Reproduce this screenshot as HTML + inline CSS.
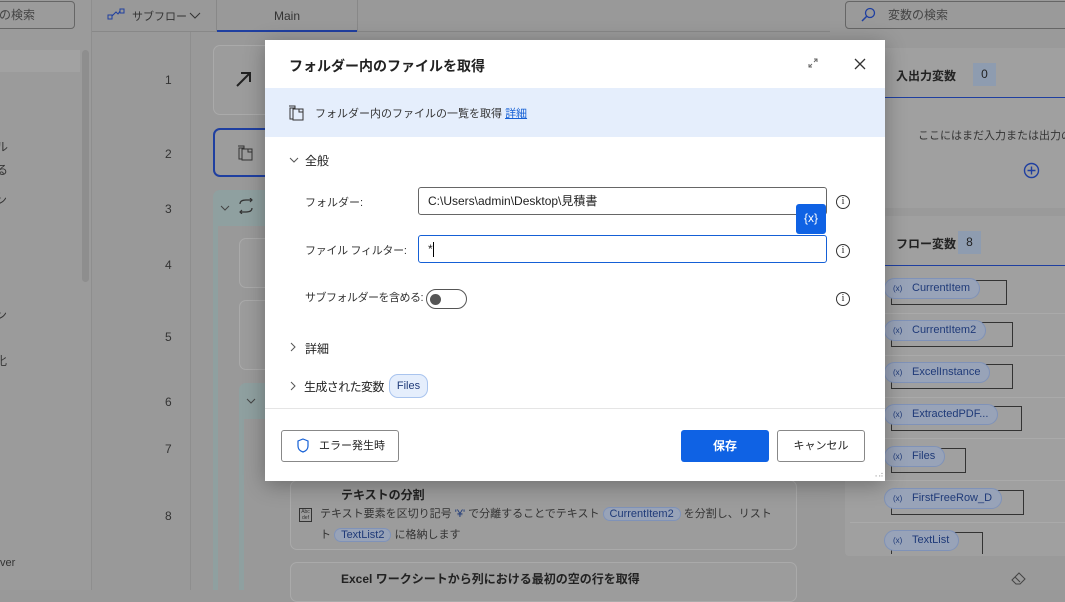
<!DOCTYPE html>
<html><head><meta charset="utf-8"><style>
*{box-sizing:border-box;margin:0;padding:0}
body{width:1065px;height:590px;overflow:hidden;position:relative;background:#999;font-family:"Liberation Sans","Noto Sans CJK JP",sans-serif;font-size:12px;color:#222}
.a{position:absolute;white-space:nowrap}
.card{position:absolute;background:#9c9c9c;border:1px solid #aaa;border-radius:7px}
.pill{position:absolute;height:21px;border:1px solid #7f92b8;border-radius:11px;background:#98a3b8;color:#1f3a78;font-size:11px;line-height:19px;padding:0 9px 0 27px;white-space:nowrap}
.pill i{position:absolute;left:8px;top:0;font-style:normal;font-size:8px}
.box{position:absolute;border:1px solid #333;height:25px}
.info{position:absolute;width:14px;height:14px;border:1px solid #333;border-radius:50%;font-size:10px;line-height:12px;text-align:center;font-family:"Liberation Serif",serif}
</style></head><body>
<div class="a" style="left:0;top:0;width:92px;height:590px;background:#9b9b9b;border-right:1px solid #8e8e8e"></div>
<div class="a" style="left:-10px;top:1px;width:85px;height:28px;border:1px solid #666;border-radius:4px;color:#444;font-size:12px;line-height:26px;padding-left:8px">の検索</div>
<div class="a" style="left:0;top:50px;width:80px;height:22px;background:#a2a2a2"></div>
<div class="a" style="left:82px;top:50px;width:7px;height:232px;background:#8e8e8e;border-radius:4px"></div>
<div class="a" style="left:-4px;top:138px;font-size:12px;color:#333">ル</div>
<div class="a" style="left:-4px;top:161px;font-size:12px;color:#333">る</div>
<div class="a" style="left:-5px;top:191px;font-size:12px;color:#333">ン</div>
<div class="a" style="left:-5px;top:306px;font-size:12px;color:#333">ン</div>
<div class="a" style="left:-5px;top:352px;font-size:12px;color:#333">化</div>
<div class="a" style="left:0;top:557px;font-size:11px;color:#333">ver</div>
<div class="a" style="left:92px;top:0;width:738px;height:32px;border-bottom:1px solid #888"></div>
<svg class="a" style="left:107px;top:8px" width="18" height="12"><rect x="1" y="7" width="4" height="4" fill="none" stroke="#1f3fa0"/><rect x="13" y="1" width="4" height="4" fill="none" stroke="#1f3fa0"/><path d="M5 8 L9 4 L11 6 L13 3" fill="none" stroke="#1f3fa0"/></svg>
<div class="a" style="left:132px;top:8px;font-size:11px;color:#333">サブフロー</div>
<svg class="a" style="left:189px;top:12px" width="12" height="8"><path d="M1 1 L6 6 L11 1" fill="none" stroke="#333"/></svg>
<div class="a" style="left:216px;top:0;width:1px;height:32px;background:#888"></div>
<div class="a" style="left:217px;top:0;width:140px;height:32px;text-align:center;line-height:32px;color:#333">Main</div>
<div class="a" style="left:217px;top:30px;width:140px;height:2px;background:#1f3fa0"></div>
<div class="a" style="left:357px;top:0;width:1px;height:32px;background:#888"></div>
<div class="a" style="left:190px;top:32px;width:1px;height:558px;background:#8e8e8e"></div>
<div class="a" style="left:165px;top:73px;color:#333">1</div>
<div class="a" style="left:165px;top:147px;color:#333">2</div>
<div class="a" style="left:165px;top:202px;color:#333">3</div>
<div class="a" style="left:165px;top:258px;color:#333">4</div>
<div class="a" style="left:165px;top:330px;color:#333">5</div>
<div class="a" style="left:165px;top:395px;color:#333">6</div>
<div class="a" style="left:165px;top:442px;color:#333">7</div>
<div class="a" style="left:165px;top:509px;color:#333">8</div>
<div class="card" style="left:213px;top:45px;width:600px;height:70px"></div>
<svg class="a" style="left:235px;top:70px" width="18" height="18"><path d="M2 16L15 3M6 3h9v9" fill="none" stroke="#222" stroke-width="2"/></svg>
<div class="card" style="left:213px;top:128px;width:600px;height:49px;border:2px solid #1f3fa0"></div>
<svg class="a" style="left:237px;top:144px" width="18" height="17"><path d="M1 2h6v2h-5v11h3" fill="none" stroke="#333"/><rect x="5" y="5" width="10" height="11" fill="none" stroke="#333"/><path d="M11 5v3h4" fill="none" stroke="#333"/></svg>
<div class="a" style="left:213px;top:190px;width:600px;height:36px;background:#8fa0a0;border-radius:7px 7px 0 0"></div>
<svg class="a" style="left:220px;top:205px" width="10" height="7"><path d="M1 1L5 5L9 1" fill="none" stroke="#444"/></svg>
<svg class="a" style="left:236px;top:198px" width="20" height="16"><path d="M4 6C4 3 7 2 10 2h6M14 0l2 2-2 2M16 10c0 3-3 4-6 4H4M6 16l-2-2 2-2" fill="none" stroke="#333" stroke-width="1.2"/></svg>
<div class="a" style="left:213px;top:226px;width:5px;height:364px;background:#8fa0a0"></div>
<div class="card" style="left:239px;top:238px;width:570px;height:50px"></div>
<div class="card" style="left:239px;top:300px;width:570px;height:70px"></div>
<div class="a" style="left:239px;top:383px;width:570px;height:36px;background:#8fa0a0;border-radius:7px 7px 0 0"></div>
<svg class="a" style="left:246px;top:398px" width="10" height="7"><path d="M1 1L5 5L9 1" fill="none" stroke="#444"/></svg>
<div class="a" style="left:239px;top:419px;width:5px;height:171px;background:#8fa0a0"></div>
<div class="card" style="left:290px;top:480px;width:507px;height:70px"></div>
<div class="a" style="left:341px;top:486px;font-size:12px;font-weight:bold;color:#222">テキストの分割</div>
<div class="a" style="left:299px;top:508px;width:13px;height:14px;border:1px solid #333;font-size:5px;line-height:6px;text-align:center;color:#333;white-space:normal">Abc def</div>
<div class="a" style="left:320px;top:504px;width:470px;font-size:11px;color:#333;line-height:21px;white-space:nowrap">テキスト要素を区切り記号 <span style="color:#1f3a78">'¥'</span> で分離することでテキスト <span style="border:1px solid #7f92b8;border-radius:10px;background:#98a3b8;color:#1f3a78;padding:0 6px">CurrentItem2</span> を分割し、リスト<br>ト <span style="border:1px solid #7f92b8;border-radius:10px;background:#98a3b8;color:#1f3a78;padding:0 6px">TextList2</span> に格納します</div>
<div class="card" style="left:290px;top:562px;width:507px;height:40px"></div>
<div class="a" style="left:341px;top:570px;font-size:12px;font-weight:bold;color:#222">Excel ワークシートから列における最初の空の行を取得</div>
<div class="a" style="left:830px;top:0;width:235px;height:590px;background:#9a9a9a"></div>
<div class="a" style="left:845px;top:1px;width:230px;height:28px;border:1px solid #666;border-radius:4px;color:#444;font-size:12px;line-height:26px;padding-left:42px">変数の検索</div>
<svg class="a" style="left:860px;top:7px" width="16" height="16"><circle cx="10" cy="6" r="4.5" fill="none" stroke="#1f3fa0" stroke-width="1.3"/><path d="M7 9 L2 14" stroke="#1f3fa0" stroke-width="1.5"/></svg>
<div class="a" style="left:845px;top:48px;width:230px;height:160px;background:#a0a0a0;border-radius:4px"></div>
<div class="a" style="left:896px;top:67px;font-size:12px;font-weight:bold;color:#222">入出力変数</div>
<div class="a" style="left:973px;top:63px;width:23px;height:23px;background:#8e9cb0;text-align:center;line-height:23px;font-size:12px">0</div>
<div class="a" style="left:845px;top:97px;width:230px;height:1px;background:#1f3fa0"></div>
<div class="a" style="left:918px;top:127px;font-size:11px;color:#333">ここにはまだ入力または出力の変</div>
<svg class="a" style="left:1023px;top:162px" width="17" height="17"><circle cx="8.5" cy="8.5" r="7" fill="none" stroke="#1f3fa0" stroke-width="1.4"/><path d="M8.5 4.5v8M4.5 8.5h8" stroke="#1f3fa0" stroke-width="1.4"/></svg>
<div class="a" style="left:845px;top:216px;width:230px;height:340px;background:#a0a0a0;border-radius:4px"></div>
<div class="a" style="left:896px;top:235px;font-size:12px;font-weight:bold;color:#222">フロー変数</div>
<div class="a" style="left:958px;top:231px;width:23px;height:23px;background:#8e9cb0;text-align:center;line-height:23px;font-size:12px">8</div>
<div class="a" style="left:845px;top:265px;width:230px;height:1px;background:#1f3fa0"></div>
<div class="a" style="left:850px;top:313px;width:215px;height:1px;background:#aaa"></div>
<div class="a" style="left:850px;top:355px;width:215px;height:1px;background:#aaa"></div>
<div class="a" style="left:850px;top:397px;width:215px;height:1px;background:#aaa"></div>
<div class="a" style="left:850px;top:438px;width:215px;height:1px;background:#aaa"></div>
<div class="a" style="left:850px;top:480px;width:215px;height:1px;background:#aaa"></div>
<div class="a" style="left:850px;top:522px;width:215px;height:1px;background:#aaa"></div>
<div class="box" style="left:891px;top:280px;width:116px"></div>
<div class="pill" style="left:884px;top:278px">CurrentItem<i>(x)</i></div>
<div class="box" style="left:891px;top:322px;width:122px"></div>
<div class="pill" style="left:884px;top:320px">CurrentItem2<i>(x)</i></div>
<div class="box" style="left:891px;top:364px;width:122px"></div>
<div class="pill" style="left:884px;top:362px">ExcelInstance<i>(x)</i></div>
<div class="box" style="left:891px;top:406px;width:131px"></div>
<div class="pill" style="left:884px;top:404px">ExtractedPDF...<i>(x)</i></div>
<div class="box" style="left:891px;top:448px;width:75px"></div>
<div class="pill" style="left:884px;top:446px">Files<i>(x)</i></div>
<div class="box" style="left:891px;top:490px;width:133px"></div>
<div class="pill" style="left:884px;top:488px">FirstFreeRow_D<i>(x)</i></div>
<div class="box" style="left:891px;top:532px;width:92px;height:22px;border-bottom:none"></div>
<div class="pill" style="left:884px;top:530px">TextList<i>(x)</i></div>
<svg class="a" style="left:1010px;top:571px" width="18" height="14"><path d="M2 9L9 2l6 6-5 5H6z M5 6l5 5" fill="none" stroke="#444"/></svg>
<div class="a" style="left:265px;top:40px;width:620px;height:441px;background:#fff;box-shadow:0 4px 20px rgba(0,0,0,.3)"></div>
<div class="a" style="left:289px;top:56px;font-size:14px;font-weight:bold;color:#222">フォルダー内のファイルを取得</div>
<svg class="a" style="left:808px;top:58px" width="10" height="10"><path d="M1 9L4 6M6 4L9 1M1 6v3h3M6 1h3v3" fill="none" stroke="#666"/></svg>
<svg class="a" style="left:854px;top:58px" width="12" height="12"><path d="M1 1L11 11M11 1L1 11" stroke="#333" stroke-width="1.3"/></svg>
<div class="a" style="left:265px;top:88px;width:620px;height:49px;background:#e5eefc"></div>
<svg class="a" style="left:288px;top:104px" width="18" height="17"><path d="M1 2h6v2h-5v11h3" fill="none" stroke="#333"/><rect x="5" y="5" width="10" height="11" fill="none" stroke="#333"/><path d="M11 5v3h4" fill="none" stroke="#333"/></svg>
<div class="a" style="left:315px;top:105px;font-size:11px;color:#333">フォルダー内のファイルの一覧を取得 <span style="color:#1560d6;text-decoration:underline">詳細</span></div>
<svg class="a" style="left:289px;top:157px" width="10" height="7"><path d="M1 1L5 5L9 1" fill="none" stroke="#555"/></svg>
<div class="a" style="left:305px;top:152px;font-size:12px;color:#222">全般</div>
<div class="a" style="left:305px;top:194px;font-size:11px;color:#333">フォルダー:</div>
<div class="a" style="left:418px;top:187px;width:409px;height:28px;border:1px solid #666;border-radius:3px;padding-left:9px;line-height:26px;font-size:12px;color:#222">C:\Users\admin\Desktop\見積書</div>
<div class="a" style="left:796px;top:204px;width:30px;height:30px;background:#0f62e4;border-radius:3px;color:#fff;text-align:center;line-height:28px;font-size:12px">{x}</div>
<div class="info" style="left:836px;top:195px">i</div>
<div class="a" style="left:305px;top:242px;font-size:11px;color:#333;letter-spacing:-0.3px">ファイル フィルター:</div>
<div class="a" style="left:418px;top:235px;width:409px;height:28px;border:1px solid #1560d6;border-radius:3px;padding-left:9px;line-height:26px;font-size:12px;color:#222">*<span style="display:inline-block;width:1px;height:15px;background:#000;vertical-align:middle"></span></div>
<div class="info" style="left:836px;top:244px">i</div>
<div class="a" style="left:305px;top:289px;font-size:11px;color:#333;letter-spacing:-0.5px">サブフォルダーを含める:</div>
<div class="a" style="left:426px;top:289px;width:41px;height:20px;border:1px solid #555;border-radius:10px"></div>
<div class="a" style="left:430px;top:294px;width:11px;height:11px;border-radius:50%;background:#555"></div>
<div class="info" style="left:836px;top:292px">i</div>
<svg class="a" style="left:290px;top:342px" width="7" height="10"><path d="M1 1L5 5L1 9" fill="none" stroke="#555"/></svg>
<div class="a" style="left:305px;top:340px;font-size:12px;color:#222">詳細</div>
<svg class="a" style="left:290px;top:381px" width="7" height="10"><path d="M1 1L5 5L1 9" fill="none" stroke="#555"/></svg>
<div class="a" style="left:304px;top:378px;font-size:12px;color:#222;letter-spacing:-0.6px">生成された変数</div>
<div class="a" style="left:389px;top:374px;width:39px;height:24px;border:1px solid #a9c4ee;background:#e5eefc;border-radius:9px;text-align:center;line-height:22px;font-size:11px;color:#1f3a78">Files</div>
<div class="a" style="left:265px;top:408px;width:620px;height:1px;background:#e5e5e5"></div>
<div class="a" style="left:281px;top:430px;width:118px;height:32px;border:1px solid #888;border-radius:3px;font-size:11px;line-height:30px;padding-left:37px;color:#222">エラー発生時</div>
<svg class="a" style="left:297px;top:438px" width="12" height="15"><path d="M6 1L11 3v5c0 3-2 5-5 6C3 13 1 11 1 8V3z" fill="none" stroke="#1560d6" stroke-width="1.2"/></svg>
<div class="a" style="left:681px;top:430px;width:88px;height:32px;background:#0f62e4;border-radius:3px;color:#fff;text-align:center;line-height:32px;font-size:12px;font-weight:bold">保存</div>
<div class="a" style="left:777px;top:430px;width:88px;height:32px;border:1px solid #888;border-radius:3px;text-align:center;line-height:30px;font-size:11px;color:#222">キャンセル</div>
<div class="a" style="left:872px;top:470px;font-size:8px;color:#aaa">⠠⠴</div>
</body></html>
